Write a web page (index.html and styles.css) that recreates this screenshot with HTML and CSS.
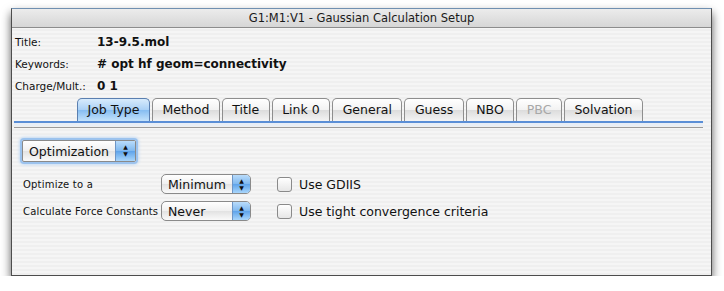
FILE: index.html
```html
<!DOCTYPE html>
<html lang="en">
<head>
  <meta charset="UTF-8">
  <title>Gaussian Calculation Setup</title>
  <link rel="stylesheet" href="styles.css">
</head>
<body>
  <div class="window">
    <div class="titlebar">G1:M1:V1 - Gaussian Calculation Setup</div>
    <div class="body">
      <div class="info">
        <div class="info-row"><span class="info-label">Title:</span><span class="info-value">13-9.5.mol</span></div>
        <div class="info-row"><span class="info-label">Keywords:</span><span class="info-value"># opt hf geom=connectivity</span></div>
        <div class="info-row"><span class="info-label">Charge/Mult.:</span><span class="info-value">0 1</span></div>
      </div>

      <div class="tabs">
        <div class="tab active">Job Type</div>
        <div class="tab">Method</div>
        <div class="tab">Title</div>
        <div class="tab">Link 0</div>
        <div class="tab">General</div>
        <div class="tab">Guess</div>
        <div class="tab">NBO</div>
        <div class="tab disabled">PBC</div>
        <div class="tab">Solvation</div>
      </div>

      <div class="pane">
        <div class="popup focused big">
          <span class="popup-text">Optimization</span>
          <span class="popup-arrows">&#9650;<br>&#9660;</span>
        </div>

        <div class="options">
          <div class="opt-row">
            <span class="opt-label">Optimize to a</span>
            <div class="popup">
              <span class="popup-text">Minimum</span>
              <span class="popup-arrows">&#9650;<br>&#9660;</span>
            </div>
            <label class="check"><span class="box"></span>Use GDIIS</label>
          </div>
          <div class="opt-row">
            <span class="opt-label">Calculate Force Constants</span>
            <div class="popup">
              <span class="popup-text">Never</span>
              <span class="popup-arrows">&#9650;<br>&#9660;</span>
            </div>
            <label class="check"><span class="box"></span>Use tight convergence criteria</label>
          </div>
        </div>
      </div>
    </div>
  </div>
</body>
</html>
```

FILE: styles.css
```css
body {
  margin: 0;
  background: #ffffff;
  font-family: "DejaVu Sans", "Liberation Sans", sans-serif;
  color: #111;
}
.window {
  margin: 8px 0 0 11px;
  width: 699px;
  height: 266px;
  border: 1px solid #4d4d4d;
  border-top-color: #6f8fb0;
  display: flex;
  flex-direction: column;
  box-shadow: 0 5px 9px rgba(0, 0, 0, 0.65);
  background: repeating-linear-gradient(#efefef 0 2px, #f5f5f5 2px 4px);
}
.titlebar {
  height: 18px;
  line-height: 18px;
  text-align: center;
  font-size: 11.5px;
  color: #1a1a1a;
  background: linear-gradient(#ececec, #d6d6d6);
  border-bottom: 1px solid #8c8c8c;
}
.body {
  flex: 1;
  display: flex;
  flex-direction: column;
  padding: 3px 8px 0 2px;
}
.info {
  display: flex;
  flex-direction: column;
  padding-left: 1px;
}
.info-row {
  display: flex;
  align-items: center;
  height: 22px;
}
.info-label {
  width: 82px;
  font-size: 10.5px;
}
.info-value {
  font-size: 12px;
  font-weight: bold;
}
.tabs {
  display: flex;
  gap: 2px;
  padding-left: 63px;
  margin-top: 1px;
  position: relative;
  z-index: 1;
}
.tab {
  height: 22px;
  line-height: 22px;
  padding: 0 9.5px;
  font-size: 12.5px;
  border: 1px solid #8e8e8e;
  border-bottom: none;
  border-radius: 5px 5px 0 0;
  background: linear-gradient(#ffffff, #f2f2f2 50%, #dcdcdc 51%, #f4f4f4);
}
.tab.active {
  border-color: #5a7fb0;
  background: linear-gradient(#d8ebfc, #a9d0f6 50%, #86bdf1 51%, #c3e2fb);
}
.tab.disabled {
  color: #a8a8a8;
}
.pane {
  flex: 1;
  border-top: 2px solid #5a8ed6;
  box-shadow: inset 0 3px 0 #e8eef6;
  padding: 4px 0 0;
  display: flex;
  flex-direction: column;
}
.pane::before {
  content: "";
  display: block;
  border-top: 1px solid #9a9a9a;
  border-left: 1px solid #9a9a9a;
  margin-bottom: 12px;
}
.popup {
  display: flex;
  align-items: center;
  justify-content: space-between;
  width: 88px;
  height: 18px;
  border: 1px solid #8a8a8a;
  border-radius: 5px;
  background: linear-gradient(#ffffff, #f0f0f0 50%, #e2e2e2 51%, #fafafa);
  overflow: hidden;
}
.popup-text {
  font-size: 12.5px;
  padding-left: 6px;
}
.popup-arrows {
  width: 18px;
  height: 100%;
  font-size: 6px;
  line-height: 7px;
  text-align: center;
  padding-top: 2px;
  box-sizing: border-box;
  color: #111;
  background: linear-gradient(#b9dcfb, #7fb8ef 50%, #5ea3ea 51%, #a9d6fb);
  border-left: 1px solid #6d95c6;
}
.popup.big {
  width: 112px;
  height: 20px;
  margin-left: 8px;
  border-radius: 2px;
  box-shadow: 0 0 0 2px #9cc3ee, 0 0 3px 3px #c6dcf4;
}
.popup.big .popup-arrows {
  width: 20px;
}
.options {
  display: flex;
  flex-direction: column;
  gap: 7px;
  margin-top: 12px;
  padding-left: 9px;
}
.opt-row {
  display: flex;
  align-items: center;
}
.opt-label {
  width: 138px;
  font-size: 10px;
  letter-spacing: 0.2px;
}
.check {
  display: flex;
  align-items: center;
  gap: 7px;
  margin-left: 26px;
  font-size: 12.5px;
}
.box {
  width: 13px;
  height: 13px;
  border: 1px solid #8a8a8a;
  border-radius: 3px;
  background: linear-gradient(#ffffff, #e6e6e6);
}
```
